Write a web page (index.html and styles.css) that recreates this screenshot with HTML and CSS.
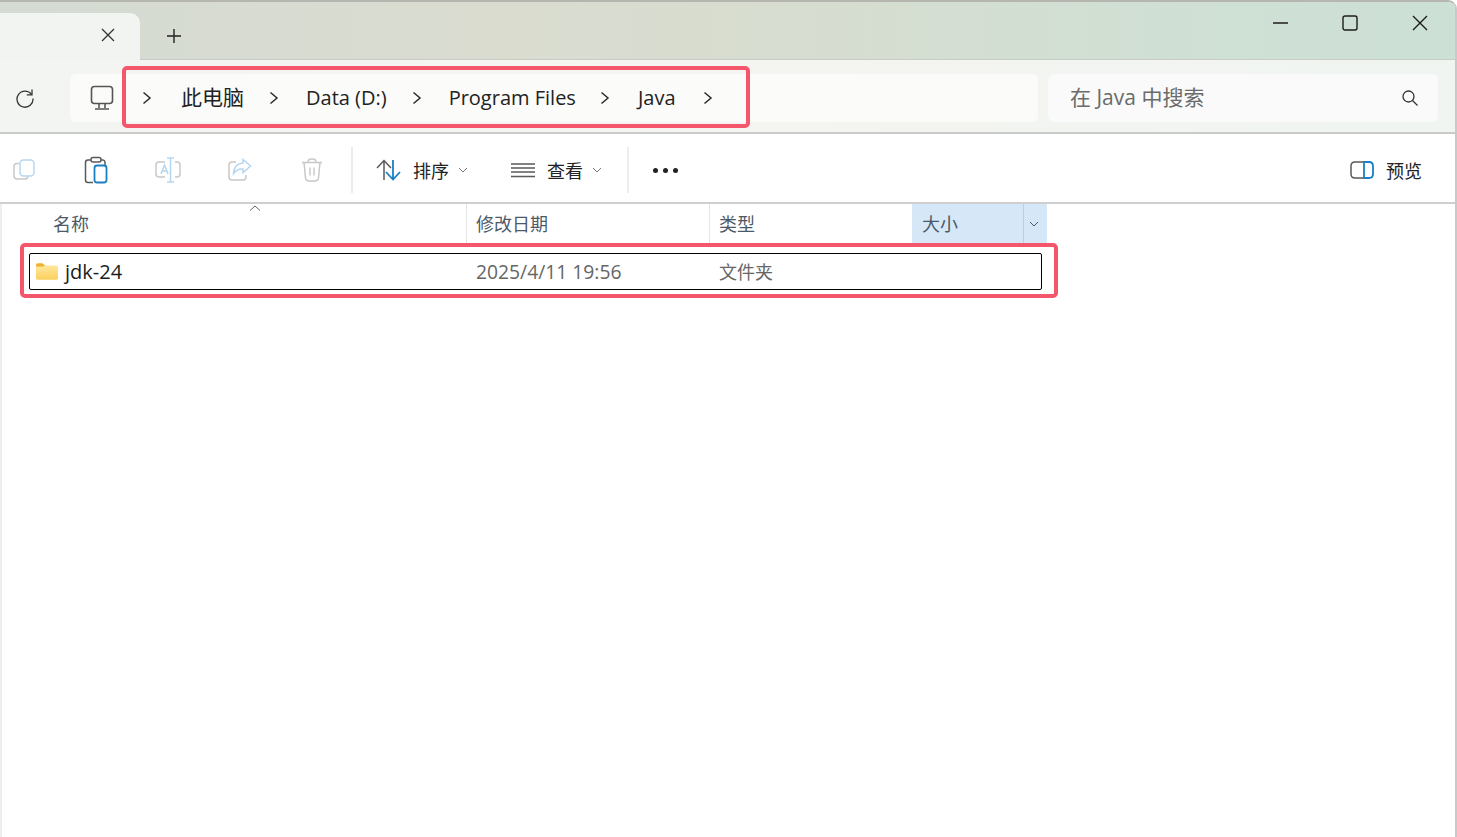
FILE: index.html
```html
<!DOCTYPE html>
<html lang="zh-CN">

<head>
    <meta charset="UTF-8">
    <meta name="viewport" content="width=device-width, initial-scale=1.0">
    <title>Java</title>
    <link rel="stylesheet" href="styles.css">
</head>

<body>
    <div class="window">

        <div class="titlebar">
            <div class="tab">
                <svg class="tab-close" width="16" height="16" viewBox="0 0 16 16"><path d="M2 2 L14 14 M14 2 L2 14" /></svg>
            </div>
            <svg class="tab-add" width="16" height="16" viewBox="0 0 16 16"><path d="M8 1 V15 M1 8 H15" /></svg>
            <div class="win-buttons">
                <svg width="16" height="16" viewBox="0 0 16 16"><path d="M1 8 H16" /></svg>
                <svg width="16" height="16" viewBox="0 0 16 16"><rect x="1" y="1" width="14" height="14" rx="2" /></svg>
                <svg width="16" height="16" viewBox="0 0 16 16"><path d="M1 1 L15 15 M15 1 L1 15" /></svg>
            </div>
        </div>

        <div class="navbar">
            <svg class="refresh" width="20" height="20" viewBox="0 0 20 20">
                <path d="M16.5 6.5 A8 8 0 1 0 18 10.5" />
                <path d="M17 1.5 V6.8 H11.8" />
            </svg>
            <div class="address">
                <svg class="pc" width="24" height="26" viewBox="0 0 24 26">
                    <rect x="1.5" y="1.5" width="21" height="17" rx="3" />
                    <path d="M9 19 V23 M15 19 V23 M5 24 H19" />
                </svg>
                <div class="crumbs">
                    <svg class="sep" width="10" height="14" viewBox="0 0 10 14"><path d="M1.5 1.5 L8 7 L1.5 12.5" /></svg>
                    <span class="crumb crumb-pc">此电脑</span>
                    <svg class="sep" width="10" height="14" viewBox="0 0 10 14"><path d="M1.5 1.5 L8 7 L1.5 12.5" /></svg>
                    <span class="crumb">Data (D:)</span>
                    <svg class="sep" width="10" height="14" viewBox="0 0 10 14"><path d="M1.5 1.5 L8 7 L1.5 12.5" /></svg>
                    <span class="crumb crumb-long">Program Files</span>
                    <svg class="sep" width="10" height="14" viewBox="0 0 10 14"><path d="M1.5 1.5 L8 7 L1.5 12.5" /></svg>
                    <span class="crumb crumb-last">Java</span>
                    <svg class="sep" width="10" height="14" viewBox="0 0 10 14"><path d="M1.5 1.5 L8 7 L1.5 12.5" /></svg>
                </div>
            </div>
            <div class="search">
                <span class="search-text">在 Java 中搜索</span>
                <svg width="18" height="18" viewBox="0 0 18 18">
                    <circle cx="7.5" cy="7.5" r="5.5" />
                    <path d="M11.5 11.5 L16.5 16.5" />
                </svg>
            </div>
        </div>

        <div class="toolbar">
            <div class="tool-group">
                <svg class="tool" width="24" height="24" viewBox="0 0 24 24">
                    <path class="gray" d="M7 5.5 H5 Q2 5.5 2 8.5 V18 Q2 21 5 21 H13 Q15.5 21 16 18.5" />
                    <rect class="blue-light" x="8" y="2" width="14" height="16" rx="3.5" />
                </svg>
                <svg class="tool" width="24" height="28" viewBox="0 0 24 28">
                    <path class="dark" d="M7 4 H4 Q1.5 4 1.5 6.5 V24 Q1.5 26.5 4 26.5 H9" />
                    <path class="dark" d="M17 4 H19 Q20.500 4 21 6 V9" />
                    <rect class="dark" x="7" y="1.500" width="10" height="4.500" rx="2" />
                    <rect class="blue" x="10.500" y="9.500" width="12" height="17" rx="2.500" />
                </svg>
                <svg class="tool" width="26" height="26" viewBox="0 0 26 26">
                    <path class="gray" d="M10 5 H4 Q1 5 1 8 V17 Q1 20 4 20 H10 M20 5 H22 Q25 5 25 8 V17 Q25 20 22 20 H20" />
                    <path class="blue-light" d="M6 17 L9.500 8 L13 17 M7.200 14 H11.800" />
                    <path class="blue-light" d="M12 1 H19 M15.500 1 V25 M12 25 H19" />
                </svg>
                <svg class="tool" width="24" height="24" viewBox="0 0 24 24">
                    <path class="gray" d="M8 4 H4 Q1 4 1 7 V19 Q1 22 4 22 H15 Q18 22 18 19 V17" />
                    <path class="blue-light" d="M15 1.500 L22.500 8 L15 14.500 V11 Q9 10.500 5.500 15.500 Q6 5.500 15 5 Z" />
                </svg>
                <svg class="tool" width="22" height="24" viewBox="0 0 22 24">
                    <path class="gray" d="M1 4.500 H21 M7 4.500 Q7 1 10 1 H12 Q15 1 15 4.500 M3 4.500 L4.500 20 Q5 23 8 23 H14 Q17 23 17.500 20 L19 4.500 M9 9.500 V17.500 M13 9.500 V17.500" />
                </svg>
            </div>
            <div class="tool-sep"></div>
            <div class="tool-menu sort-menu">
                <svg class="tool" width="26" height="22" viewBox="0 0 26 22">
                    <path class="dark" d="M8 21 V2 M1 9 L8 1.500 L15 9" />
                    <path class="blue" d="M17 1 V20 M10 13 L17 20.500 L24 13" />
                </svg>
                <span>排序</span>
                <svg class="caret" width="10" height="6" viewBox="0 0 10 6"><path d="M1 1 L5 5 L9 1" /></svg>
            </div>
            <div class="tool-menu view-menu">
                <svg class="tool" width="24" height="16" viewBox="0 0 24 16">
                    <path class="dark" d="M0 2 H24 M0 6 H24 M0 10 H24 M0 14.500 H24" />
                </svg>
                <span>查看</span>
                <svg class="caret" width="10" height="6" viewBox="0 0 10 6"><path d="M1 1 L5 5 L9 1" /></svg>
            </div>
            <div class="tool-sep"></div>
            <div class="more">
                <i></i><i></i><i></i>
            </div>
            <div class="preview">
                <svg class="tool" width="24" height="18" viewBox="0 0 24 18">
                    <path class="dark" d="M14 1 H5 Q1 1 1 5 V13 Q1 17 5 17 H14" />
                    <path class="blue" d="M14 1 H19 Q23 1 23 5 V13 Q23 17 19 17 H14 Z" />
                </svg>
                <span>预览</span>
            </div>
        </div>

        <div class="list">
            <div class="list-head">
                <div class="col col-name">名称
                    <svg class="sort-arrow" width="12" height="6" viewBox="0 0 12 6"><path d="M1 5.500 L6 1 L11 5.500" /></svg>
                </div>
                <div class="col col-date">修改日期</div>
                <div class="col col-type">类型</div>
                <div class="col col-size">
                    <span>大小</span>
                    <div class="size-drop">
                        <svg width="10" height="6" viewBox="0 0 10 6"><path d="M1 1 L5 5 L9 1" /></svg>
                    </div>
                </div>
            </div>
            <div class="row">
                <div class="row-name">
                    <svg class="folder" width="22" height="17" viewBox="0 0 24 18">
                        <defs>
                            <linearGradient id="folderFill" x1="0" y1="0" x2="0" y2="1">
                                <stop offset="0" stop-color="#ffe89c" />
                                <stop offset="1" stop-color="#fbcf5c" />
                            </linearGradient>
                        </defs>
                        <path d="M0 2 Q0 0 2 0 H7 L10 2.500 V4 H0 Z" fill="#eeb02f" />
                        <path d="M0 3.500 H8 L10 2.500 H22 Q24 2.500 24 4.500 V16 Q24 18 22 18 H2 Q0 18 0 16 Z" fill="url(#folderFill)" />
                    </svg>
                    <span>jdk-24</span>
                </div>
                <div class="row-date">2025/4/11 19:56</div>
                <div class="row-type">文件夹</div>
            </div>
        </div>

    </div>

    <div class="mark mark-path"></div>
    <div class="mark mark-row"></div>
</body>

</html>
```

FILE: styles.css
```css
* {
    margin: 0;
    padding: 0;
    box-sizing: border-box;
}

html,
body {
    height: 100%;
    overflow: hidden;
}

body {
    background-color: #fff;
    font-family: "Open Sans", "Noto Sans CJK SC", sans-serif;
    color: #1c1c1c;
    position: relative;
}

svg {
    display: block;
    flex: none;
    fill: none;
    stroke: #1a1a1a;
    stroke-width: 1.5;
}

.window {
    height: 100%;
    display: flex;
    flex-direction: column;
    border-top: 2px solid #b5b6b0;
    border-right: 2px solid #c9c9c9;
    border-top-right-radius: 9px;
    overflow: hidden;
}

/* thanh tieu de */
.titlebar {
    height: 58px;
    flex: none;
    display: flex;
    align-items: flex-end;
    background: linear-gradient(90deg, #d5dbd3 0%, #dadcd0 35%, #d7ddd0 55%, #cfe0d5 85%, #cde0d6 100%);
    border-bottom: 1px solid #c7ccc5;
}

.tab {
    width: 140px;
    height: 47px;
    margin-bottom: -1px;
    background-color: #f1f4f1;
    border-top-right-radius: 10px;
    border-bottom: 1px solid #f1f4f1;
    display: flex;
    justify-content: flex-end;
    padding: 14px 24px 0 0;
}

.tab-close {
    stroke: #333;
    stroke-width: 1.3;
}

.tab-add {
    margin: 0 0 15px 26px;
    stroke: #222;
    stroke-width: 1.4;
}

.win-buttons {
    margin-left: auto;
    align-self: flex-start;
    display: flex;
    gap: 54px;
    padding: 13px 27px 0 0;
}

.win-buttons svg {
    stroke: #1c1c1c;
    stroke-width: 1.4;
}

/* thanh dia chi */
.navbar {
    height: 74px;
    flex: none;
    display: flex;
    align-items: center;
    padding: 3px 17px 0 15px;
    background: linear-gradient(90deg, #f3f5f3 0%, #f5f4f0 45%, #f0f5f2 100%);
    border-bottom: 2px solid #c9cbc9;
}

.refresh {
    stroke: #333;
    stroke-width: 1.3;
    margin-right: 35px;
}

.address {
    width: 968px;
    height: 48px;
    background-color: #fbfbfa;
    border-radius: 6px;
    display: flex;
    align-items: center;
    padding-left: 20px;
}

.pc {
    stroke: #555;
    stroke-width: 1.6;
    margin-right: 28px;
}

.crumbs {
    display: flex;
    align-items: center;
}

.sep {
    stroke: #2a2a2a;
    stroke-width: 1.5;
}

.crumb {
    font-size: 20px;
    margin: 0 25px 0 27px;
    padding-bottom: 1px;
    color: #222;
    white-space: nowrap;
}

.crumb-pc {
    font-size: 21px;
    margin: 0 25px 0 29px;
    padding-bottom: 4px;
}

.crumb-long {
    margin-right: 24px;
}

.crumb-last {
    margin: 0 27px 0 28px;
}

.search {
    width: 390px;
    height: 48px;
    margin-left: 10px;
    background-color: #f9faf9;
    border-radius: 6px;
    display: flex;
    align-items: center;
    justify-content: space-between;
    padding: 0 19px 0 22px;
}

.search-text {
    font-size: 21px;
    padding-bottom: 4px;
    color: #6b6b6b;
}

.search svg {
    stroke: #333;
    stroke-width: 1.3;
}

/* thanh cong cu */
.toolbar {
    height: 70px;
    flex: none;
    display: flex;
    align-items: center;
    border-bottom: 2px solid #cfcfcf;
    padding: 4px 0 0 12px;
    font-size: 18px;
    color: #222;
}

.tool-group {
    display: grid;
    grid-template-columns: repeat(5, 24px);
    gap: 48px;
    align-items: center;
    justify-items: center;
}

.tool-sep {
    width: 2px;
    height: 46px;
    background-color: #ececec;
}

.gray {
    stroke: #c8c8c8;
}

.blue-light {
    stroke: #b5d6ef;
}

.dark {
    stroke: #5a5a5a;
}

.blue {
    stroke: #1a7fc4;
    stroke-width: 1.8;
}

.tool-group + .tool-sep {
    margin-left: 27px;
}

.tool-menu {
    display: flex;
    align-items: center;
}

.tool-menu span {
    margin-left: 11px;
}

.caret {
    margin-left: 9px;
    stroke: #777;
    stroke-width: 1;
}

.sort-menu {
    margin-left: 23px;
}

.view-menu {
    margin-left: 43px;
}

.view-menu span {
    margin-left: 12px;
}

.view-menu + .tool-sep {
    margin-left: 25px;
}

.more {
    display: flex;
    gap: 5px;
    margin-left: 24px;
}

.more i {
    display: block;
    width: 5px;
    height: 5px;
    border-radius: 50%;
    background-color: #222;
}

.preview {
    margin-left: auto;
    margin-right: 33px;
    display: flex;
    align-items: center;
    gap: 12px;
}

/* danh sach file */
.list {
    flex: 1;
    border-left: 2px solid #eeeeee;
}

.list-head {
    height: 39px;
    display: flex;
    color: #4c5a68;
    font-size: 18px;
}

.col {
    display: flex;
    align-items: center;
    padding: 0 0 2px 9px;
    border-right: 1px solid #e5e5e5;
    position: relative;
}

.col-name {
    width: 465px;
    padding-left: 51px;
}

.col-date {
    width: 243px;
}

.col-type {
    width: 202px;
    border-right: none;
}

.col-size {
    width: 135px;
    padding: 0 0 0 9px;
    background-color: #d6e8f7;
    border-right: none;
    justify-content: space-between;
}

.col-size span {
    margin: 0 0 2px 1px;
}

.sort-arrow {
    position: absolute;
    left: 247px;
    top: 1px;
    stroke: #666;
    stroke-width: 1;
}

.size-drop {
    width: 24px;
    height: 100%;
    border-left: 1px solid #b9cfe2;
    padding-right: 3px;
    display: flex;
    align-items: center;
    justify-content: center;
}

.size-drop svg {
    stroke: #556;
    stroke-width: 1;
}

.row {
    width: 1013px;
    height: 37px;
    margin: 10px 0 0 27px;
    border: 1px solid #000;
    border-radius: 2px;
    display: flex;
    align-items: center;
    font-size: 18px;
}

.row-name {
    width: 436px;
    display: flex;
    align-items: center;
    gap: 7px;
    padding-left: 6px;
    font-size: 20px;
    color: #1c1c1c;
}

.folder {
    stroke: none;
}

.row-date {
    width: 243px;
    padding-left: 10px;
    font-size: 19.3px;
    color: #666;
}

.row-type {
    padding: 0 0 2px 10px;
    color: #666;
}

/* khung do danh dau */
.mark {
    position: absolute;
    border: 4px solid #f4566c;
    border-radius: 5px;
}

.mark-path {
    left: 122px;
    top: 66px;
    width: 628px;
    height: 62px;
}

.mark-row {
    left: 20px;
    top: 243px;
    width: 1038px;
    height: 55px;
}
```
